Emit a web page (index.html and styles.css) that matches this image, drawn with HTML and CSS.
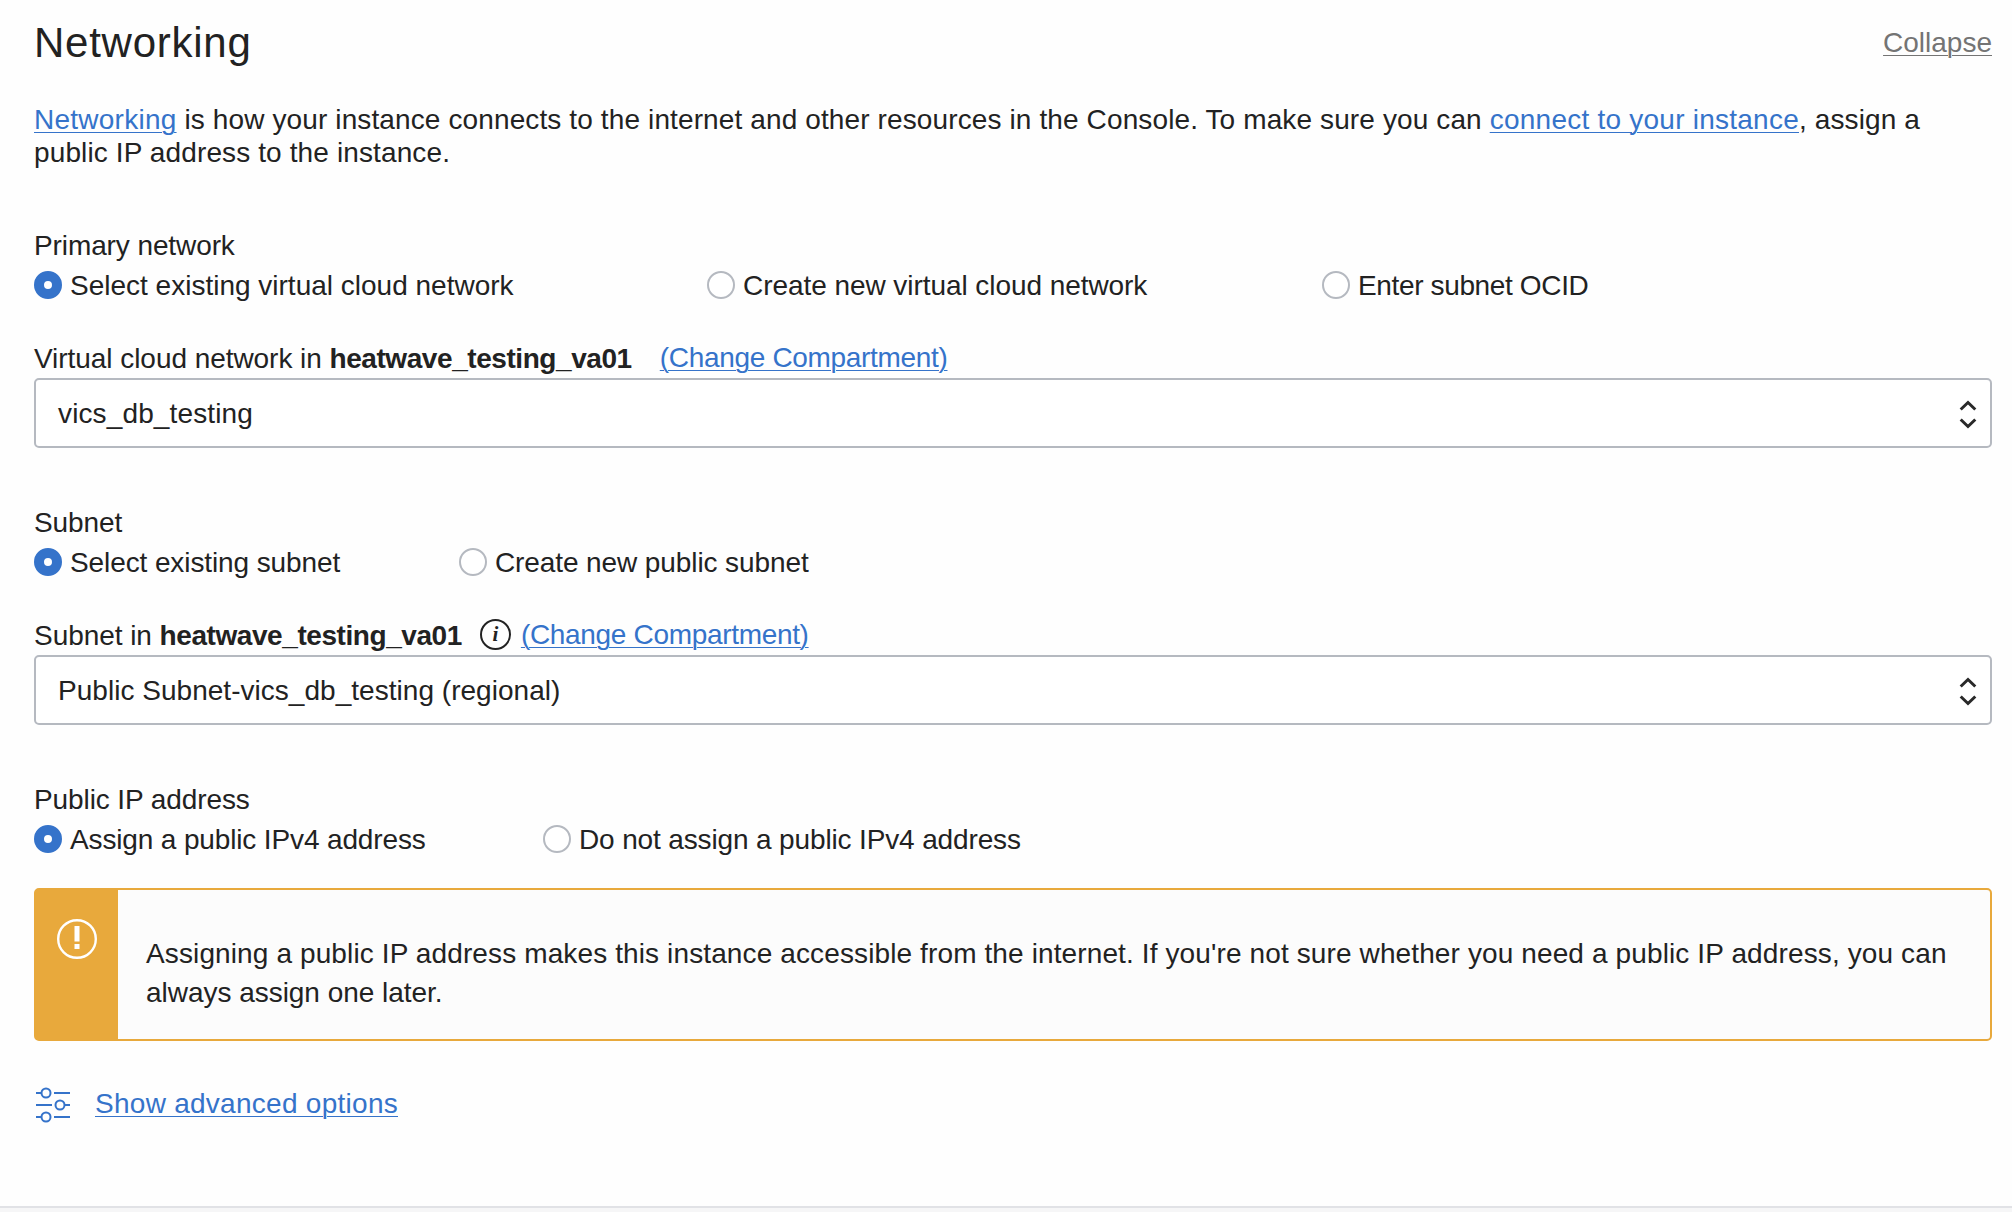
FILE: index.html
```html
<!DOCTYPE html>
<html lang="en">
<head>
<meta charset="utf-8">
<title>Networking</title>
<link rel="stylesheet" href="styles.css">
</head>
<body>
<main class="panel">
  <header class="panel-header">
    <h1 class="panel-title">Networking</h1>
    <a class="collapse" href="#">Collapse</a>
  </header>
  <p class="intro"><a class="link link-networking" href="#">Networking</a> is how your instance connects to the internet and other resources in the Console. To make sure you can <a class="link link-connect" href="#">connect to your instance</a>, assign a<br>public IP address to the instance.</p>

  <section class="group group-first">
    <div class="group-label">Primary network</div>
    <div class="radios radios-network">
      <label class="option"><span class="radio radio-on"></span><span>Select existing virtual cloud network</span></label>
      <label class="option option-create"><span class="radio"></span><span>Create new virtual cloud network</span></label>
      <label class="option option-ocid"><span class="radio"></span><span>Enter subnet OCID</span></label>
    </div>
    <div class="field-label"><span>Virtual cloud network in <b>heatwave_testing_va01</b></span><a class="link change change-vcn" href="#">(Change Compartment)</a></div>
    <div class="select select-vcn"><span>vics_db_testing</span><svg class="arrows" viewBox="0 0 20 32"><path d="M2.700 11.500 10 4.500l7.300 7M2.700 21.500 10 28.500l7.300-7"/></svg></div>
  </section>

  <section class="group">
    <div class="group-label">Subnet</div>
    <div class="radios radios-subnet">
      <label class="option"><span class="radio radio-on"></span><span>Select existing subnet</span></label>
      <label class="option"><span class="radio"></span><span>Create new public subnet</span></label>
    </div>
    <div class="field-label"><span>Subnet in <b>heatwave_testing_va01</b></span><span class="info">i</span><a class="link change" href="#">(Change Compartment)</a></div>
    <div class="select"><span>Public Subnet-vics_db_testing (regional)</span><svg class="arrows" viewBox="0 0 20 32"><path d="M2.700 11.500 10 4.500l7.300 7M2.700 21.500 10 28.500l7.300-7"/></svg></div>
  </section>

  <section class="group">
    <div class="group-label">Public IP address</div>
    <div class="radios radios-ip">
      <label class="option"><span class="radio radio-on"></span><span>Assign a public IPv4 address</span></label>
      <label class="option"><span class="radio"></span><span>Do not assign a public IPv4 address</span></label>
    </div>
  </section>

  <div class="alert">
    <div class="alert-side"><svg class="alert-icon" viewBox="0 0 40 40"><circle cx="20" cy="20" r="18.800"/><path d="M20 7v15.500M20 25v5"/></svg></div>
    <p class="alert-text"><span class="alert-lead">Assigning a public IP address makes this instance accessible from the internet. If you're not sure whether you need a public IP address, you can</span><br>always assign one later.</p>
  </div>

  <div class="advanced">
    <svg class="sliders" viewBox="0 0 36 36"><path d="M1 6h5M19 6h16M1 18h16M30 18h5M1 30h5M19 30h16"/><circle cx="11" cy="6" r="4.500"/><circle cx="25" cy="18" r="4.500"/><circle cx="11" cy="30" r="4.500"/></svg>
    <a class="link" href="#">Show advanced options</a>
  </div>
</main>
<footer class="footer"></footer>
</body>
</html>
```
FILE: styles.css
```css
* { box-sizing: border-box; }
body {
  margin: 0;
  height: 1212px;
  display: flex;
  flex-direction: column;
  overflow: hidden;
  background: #fefefe;
  color: #222;
  font: 28px/33px "Liberation Sans", Arial, sans-serif;
}
b { letter-spacing: -0.43px; }
.panel { flex: 1; padding: 17px 20px 0 34px; }
.panel-header { display: flex; justify-content: space-between; height: 52px; }
.panel-title { margin: 0; font-size: 42px; font-weight: 400; line-height: 52px; letter-spacing: 0.75px; }
.collapse { color: #747474; line-height: 51px; text-underline-offset: 3px; text-decoration-thickness: 1px; }
.link { color: #3573ca; text-underline-offset: 3px; text-decoration-thickness: 1px; }
.link-networking { letter-spacing: 0.25px; }
.link-connect { letter-spacing: 0.24px; }
.intro { margin: 34px 0 0; height: 66px; white-space: nowrap; letter-spacing: 0.12px; }
.group { margin-top: 58px; white-space: nowrap; }
.group-first { margin-top: 60px; }
.group-label { height: 33px; letter-spacing: -0.1px; }
.radios { display: grid; height: 28px; margin-top: 9px; line-height: 30px; }
.radios-network { grid-template-columns: 673px 615px 1fr; }
.radios-subnet { grid-template-columns: 425px 1fr; letter-spacing: -0.1px; }
.radios-ip { grid-template-columns: 509px 1fr; letter-spacing: -0.14px; }
.option { display: flex; gap: 8px; }
.option-create { letter-spacing: -0.06px; }
.option-ocid { letter-spacing: -0.36px; }
.radio { width: 28px; height: 28px; flex: none; border: 2px solid #b5b9c0; border-radius: 50%; background: #fff; }
.radio-on { border: 10px solid #3573ca; }
.field-label { display: flex; height: 33px; margin-top: 43px; letter-spacing: -0.05px; }
.change { margin-left: 10px; line-height: 32px; letter-spacing: -0.32px; }
.change-vcn { margin-left: 28px; }
.info { width: 31px; height: 31px; margin: 0 0 0 18px; border: 2px solid #222; border-radius: 50%; font: italic bold 21px/26px "Liberation Serif", serif; text-align: center; }
.select { display: flex; align-items: center; justify-content: space-between; height: 70px; margin-top: 3px; padding: 0 12px 0 22px; border: 2px solid #b5b9c0; border-radius: 5px; background: #fff; letter-spacing: 0.03px; }
.select-vcn { letter-spacing: 0.13px; }
.arrows { width: 20px; height: 32px; margin-top: 1px; fill: none; stroke: #292929; stroke-width: 3; }
.alert { display: flex; height: 153px; margin-top: 35px; border: 2px solid #e8a93c; border-radius: 5px; background: #fcfcfc; }
.alert-side { width: 82px; padding: 29px 0 0 21px; background: #e8a93c; }
.alert-icon { display: block; width: 40px; height: 40px; fill: none; stroke: #fff; stroke-width: 2.400; }
.alert-icon path { stroke-width: 5; }
.alert-text { margin: 44px 0 0 28px; line-height: 39px; white-space: nowrap; letter-spacing: -0.03px; }
.alert-lead { letter-spacing: 0.12px; }
.advanced { display: flex; margin-top: 46px; padding-left: 1px; gap: 24px; letter-spacing: 0.27px; }
.sliders { width: 36px; height: 36px; fill: none; stroke: #3573ca; stroke-width: 2; }
.footer { height: 6px; border-top: 2px solid #e1e2e6; background: #f6f6f7; }
```
